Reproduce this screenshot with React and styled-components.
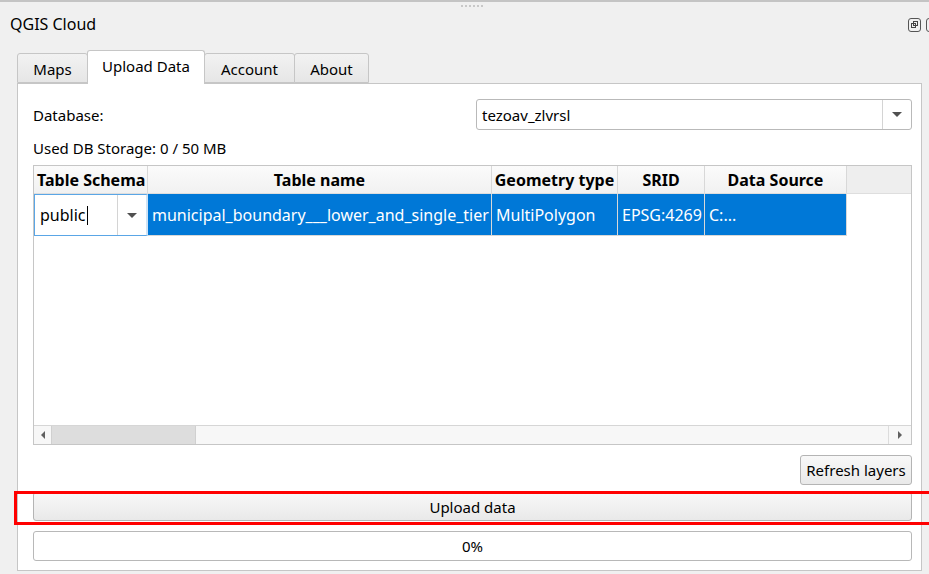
import React from 'react';
import styled, { createGlobalStyle } from 'styled-components';

const GlobalStyle = createGlobalStyle`
    html, body {
        margin: 0;
        padding: 0;
        background: #f0f0f0;
    }
    body {
        font-family: "Noto Sans", "Open Sans", sans-serif;
        color: #000;
    }
`;

const Dock = styled.div`
    position: relative;
    width: 929px;
    height: 574px;
    box-sizing: border-box;
    border-top: 2px solid #c4c4c4;
    background: #f0f0f0;
    overflow: hidden;
    display: flex;
    flex-direction: column;
`;

const Grip = styled.div`
    display: flex;
    justify-content: center;
    gap: 2px;
    height: 6px;
    padding-top: 3px;
    padding-left: 15px;
    & span {
        width: 2px;
        height: 2px;
        background: #c8c8c8;
    }
`;

const TitleBar = styled.div`
    box-sizing: border-box;
    display: flex;
    align-items: flex-start;
    justify-content: space-between;
    height: 39px;
    padding-top: 2px;
    padding-left: 10px;
    font-size: 16px;
`;

const DockButtons = styled.div`
    display: flex;
    gap: 5px;
    margin-right: -10px;
    margin-top: 5px;
`;

const TabBar = styled.div`
    display: flex;
    align-items: flex-end;
    height: 33px;
    margin-left: 17px;
`;

const Tab = styled.div`
    box-sizing: border-box;
    width: ${p => p.w}px;
    height: ${p => (p.active ? 34 : 30)}px;
    margin-bottom: ${p => (p.active ? -1 : 0)}px;
    margin-left: ${p => (p.first ? 0 : -1)}px;
    border: 1px solid #c6c6c6;
    border-bottom: ${p => (p.active ? 'none' : '1px solid #c6c6c6')};
    border-radius: 3px 3px 0 0;
    background: ${p => (p.active ? '#ffffff' : 'linear-gradient(#f2f2f2, #e6e6e6)')};
    display: flex;
    align-items: center;
    justify-content: center;
    padding-top: ${p => (p.active ? 0 : 2)}px;
    padding-bottom: ${p => (p.active ? 4 : 0)}px;
    font-size: 15px;
    position: relative;
    z-index: ${p => (p.active ? 2 : 1)};
`;

const Pane = styled.div`
    box-sizing: border-box;
    width: 905px;
    height: 488px;
    margin-left: 17px;
    border: 1px solid #c6c6c6;
    background: #ffffff;
    padding: 15px 9px 0 15px;
    display: flex;
    flex-direction: column;
`;

const Row = styled.div`
    display: flex;
    align-items: center;
    justify-content: ${p => p.justify || 'space-between'};
`;

const Label = styled.div`
    font-size: 15px;
`;

const Combo = styled.div`
    box-sizing: border-box;
    width: 436px;
    height: 31px;
    border: 1px solid #b9b9b9;
    border-radius: 3px;
    background: #fff;
    display: flex;
    align-items: stretch;
    font-size: 15px;
`;

const ComboText = styled.div`
    flex: 1;
    display: flex;
    align-items: center;
    padding-left: 5px;
`;

const ComboArrow = styled.div`
    width: 28px;
    border-left: 1px solid #d4d4d4;
    display: flex;
    align-items: center;
    justify-content: center;
    &::after {
        content: '';
        border-left: 5px solid transparent;
        border-right: 5px solid transparent;
        border-top: 5px solid #505050;
    }
`;

const Storage = styled.div`
    font-size: 15px;
    height: 35px;
    display: flex;
    align-items: center;
`;

const Table = styled.div`
    box-sizing: border-box;
    width: 879px;
    height: 280px;
    border: 1px solid #c6c6c6;
    display: flex;
    flex-direction: column;
    background: #fff;
`;

const HeaderRow = styled.div`
    display: flex;
    height: 27px;
    background: #eeeeee;
    border-bottom: 1px solid #dedede;
`;

const HeaderCell = styled.div`
    box-sizing: border-box;
    width: ${p => p.w}px;
    flex-shrink: 0;
    background: linear-gradient(#fbfbfb, #f1f1f1);
    border-right: 1px solid #d8d8d8;
    display: flex;
    align-items: center;
    justify-content: ${p => (p.left ? 'flex-start' : 'center')};
    padding-left: ${p => (p.left ? 3 : 0)}px;
    font-weight: bold;
    font-size: 16px;
    white-space: nowrap;
    overflow: hidden;
`;

const Body = styled.div`
    flex: 1;
`;

const DataRow = styled.div`
    display: flex;
    height: 42px;
`;

const Cell = styled.div`
    box-sizing: border-box;
    width: ${p => p.w}px;
    flex-shrink: 0;
    background: #0078d7;
    color: #fff;
    border-right: 1px solid #d8d8d8;
    border-bottom: 1px solid #d8d8d8;
    display: flex;
    align-items: center;
    padding-left: 4px;
    font-size: 16px;
    white-space: nowrap;
    overflow: hidden;
`;

const EditorCell = styled.div`
    box-sizing: border-box;
    width: ${p => p.w}px;
    flex-shrink: 0;
    border: 1px solid #5aa6e6;
    border-right: 2px solid #cfe3f5;
    background: #fff;
    display: flex;
    align-items: stretch;
    font-size: 16px;
`;

const EditorText = styled.div`
    flex: 1;
    display: flex;
    align-items: center;
    padding-left: 5px;
    & i {
        display: inline-block;
        width: 1px;
        height: 19px;
        background: #000;
        margin-left: 1px;
    }
`;

const ScrollBar = styled.div`
    height: 18px;
    display: flex;
    border-top: 1px solid #d6d6d6;
    background: #f7f7f7;
`;

const ScrollBtn = styled.div`
    width: ${p => p.w}px;
    display: flex;
    align-items: center;
    justify-content: center;
    border-left: ${p => (p.right ? '1px solid #dcdcdc' : 'none')};
    &::after {
        content: '';
        border-top: 4px solid transparent;
        border-bottom: 4px solid transparent;
        ${p => (p.right ? 'border-left: 4px solid #606060;' : 'border-right: 4px solid #606060;')}
    }
`;

const Thumb = styled.div`
    width: 143px;
    background: #dddddd;
    border-left: 1px solid #d0d0d0;
    border-right: 1px solid #d0d0d0;
`;

const Track = styled.div`
    flex: 1;
`;

const Button = styled.div`
    box-sizing: border-box;
    width: ${p => (p.w ? `${p.w}px` : '879px')};
    height: ${p => p.h || 30}px;
    margin-top: ${p => p.mt || 0}px;
    border: 1px solid #b4b4b4;
    border-radius: 3px;
    background: linear-gradient(#f8f8f8, #e9e9e9);
    display: flex;
    align-items: center;
    justify-content: center;
    font-size: 15px;
`;

const Progress = styled.div`
    box-sizing: border-box;
    width: 879px;
    height: 30px;
    margin-top: 10px;
    border: 1px solid #b8b8b8;
    border-radius: 3px;
    background: #fff;
    display: flex;
    align-items: center;
    justify-content: center;
    font-size: 15px;
`;

const ButtonRow = styled(Row)`
    margin-top: 10px;
`;

const Highlight = styled.div`
    position: absolute;
    left: 14px;
    top: 489px;
    width: 925px;
    height: 34px;
    box-sizing: border-box;
    border: 3px solid #ff0000;
    pointer-events: none;
`;

const DockIcon = ({ close }) => (
    <svg width="13" height="14" viewBox="0 0 13 14">
        <rect x="0.5" y="0.5" width="12" height="13" rx="2.5" fill="none" stroke="#555" />
        {close ? (
            <path d="M4 4.5 L9 9.5 M9 4.5 L4 9.5" stroke="#444" strokeWidth="1.6" />
        ) : (
            <g fill="none" stroke="#444" strokeWidth="1">
                <rect x="5.5" y="3.5" width="4" height="4" />
                <rect x="3.5" y="5.5" width="4" height="4" />
            </g>
        )}
    </svg>
);

const columns = [
    { title: 'Table Schema', w: 114, left: true },
    { title: 'Table name', w: 344 },
    { title: 'Geometry type', w: 126 },
    { title: 'SRID', w: 87 },
    { title: 'Data Source', w: 142 },
];

function App() {
    return (
        <>
            <GlobalStyle />
            <Dock>
                <Grip>
                    {[0, 1, 2, 3, 4, 5].map(i => <span key={i} />)}
                </Grip>
                <TitleBar>
                    <span>QGIS Cloud</span>
                    <DockButtons>
                        <DockIcon />
                        <DockIcon close />
                    </DockButtons>
                </TitleBar>
                <TabBar>
                    <Tab first w={71}>Maps</Tab>
                    <Tab active w={118}>Upload Data</Tab>
                    <Tab w={91}>Account</Tab>
                    <Tab w={75}>About</Tab>
                </TabBar>
                <Pane>
                    <Row>
                        <Label>Database:</Label>
                        <Combo>
                            <ComboText>tezoav_zlvrsl</ComboText>
                            <ComboArrow />
                        </Combo>
                    </Row>
                    <Storage>Used DB Storage: 0 / 50 MB</Storage>
                    <Table>
                        <HeaderRow>
                            {columns.map(c => (
                                <HeaderCell key={c.title} w={c.w} left={c.left}>{c.title}</HeaderCell>
                            ))}
                        </HeaderRow>
                        <Body>
                            <DataRow>
                                <EditorCell w={114}>
                                    <EditorText>public<i /></EditorText>
                                    <ComboArrow />
                                </EditorCell>
                                <Cell w={344}>municipal_boundary___lower_and_single_tier</Cell>
                                <Cell w={126}>MultiPolygon</Cell>
                                <Cell w={87}>EPSG:4269</Cell>
                                <Cell w={142}>C:...</Cell>
                            </DataRow>
                        </Body>
                        <ScrollBar>
                            <ScrollBtn w={17} />
                            <Thumb />
                            <Track />
                            <ScrollBtn right w={22} />
                        </ScrollBar>
                    </Table>
                    <ButtonRow justify="flex-end">
                        <Button w={112}>Refresh layers</Button>
                    </ButtonRow>
                    <Button h={29} mt={7}>Upload data</Button>
                    <Progress>0%</Progress>
                </Pane>
                <Highlight />
            </Dock>
        </>
    );
}

export default App;
